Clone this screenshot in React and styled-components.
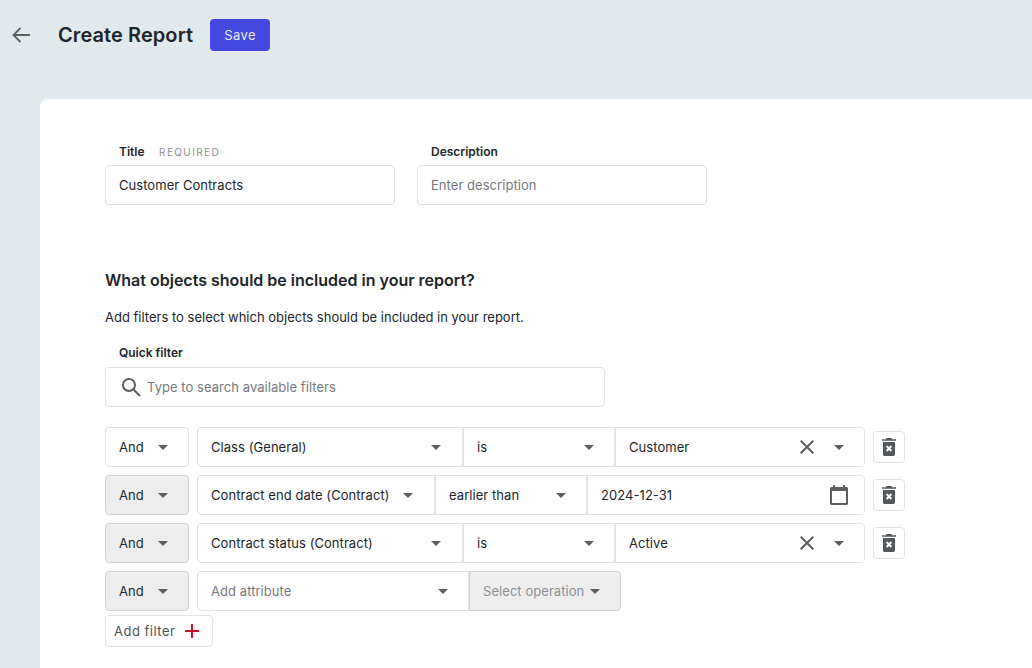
import React from 'react';
import styled, { createGlobalStyle } from 'styled-components';

const Global = createGlobalStyle`
  html, body { margin: 0; padding: 0; height: 100%; overflow: hidden; }
  body { background: #e1e9ec; font-family: Inter, "Liberation Sans", sans-serif; color: #212529; }
  * { box-sizing: border-box; }
`;

const Page = styled.div`
  width: 1032px;
  height: 668px;
  display: flex;
  flex-direction: column;
  overflow: hidden;
`;

const Header = styled.header`
  height: 99px;
  flex: none;
  display: flex;
  align-items: flex-start;
  padding: 19px 0 0 12px;
`;

const BackIcon = styled.svg`
  width: 18px;
  height: 16px;
  margin-top: 8px;
  margin-right: 28px;
  fill: none;
  stroke: #5c5f62;
  stroke-width: 1.8;
`;

const PageTitle = styled.h1`
  margin: 0 17px 0 0;
  font-size: 20px;
  line-height: 32px;
  font-weight: 600;
  letter-spacing: 0.08px;
  color: #212529;
`;

const SaveButton = styled.button`
  width: 60px;
  height: 32px;
  border: 0;
  border-radius: 4px;
  background: #4349e0;
  color: #e8e9ff;
  font: 400 13px Inter, sans-serif;
  letter-spacing: 0.45px;
  padding: 0;
`;

const Card = styled.main`
  flex: 1;
  margin-left: 40px;
  background: #fff;
  border-radius: 8px 0 0 0;
  padding: 45px 0 0 65px;
`;

const FieldRow = styled.div`
  display: flex;
  gap: 22px;
`;

const Field = styled.div`
  width: ${(p) => p.$width}px;
`;

const Label = styled.label`
  display: flex;
  align-items: baseline;
  height: 16px;
  line-height: 16px;
  margin: 0 0 ${(p) => p.$gap ?? 5}px 14px;
  font-size: 12px;
  font-weight: 600;
  color: #212529;
`;

const Required = styled.span`
  margin-left: 14.500px;
  font-size: 10px;
  font-weight: 400;
  letter-spacing: 1.4px;
  color: #8b8f93;
`;

const TextInput = styled.input`
  display: block;
  width: 100%;
  height: 40px;
  border: 1px solid #e2e3e5;
  border-radius: 4px;
  padding: 0 13px;
  font: 400 13px Inter, sans-serif;
  letter-spacing: 0.05px;
  color: #212529;
  outline: none;
  background: #fff;
  &::placeholder { color: #75797d; opacity: 1; }
`;

const SectionTitle = styled.h2`
  margin: 65px 0 0;
  font-size: 16px;
  line-height: 20px;
  font-weight: 600;
  color: #212529;
`;

const Hint = styled.p`
  margin: 17px 0 0;
  font-size: 13px;
  line-height: 20px;
  color: #212529;
`;

const QuickFilter = styled.div`
  margin-top: 18px;
  width: 500px;
`;

const SearchBox = styled.div`
  position: relative;
`;

const SearchIcon = styled.svg`
  position: absolute;
  left: 16px;
  top: 10px;
  width: 20px;
  height: 20px;
  fill: none;
  stroke: #5c5f62;
  stroke-width: 2;
`;

const SearchInput = styled(TextInput)`
  padding-left: 41px;
`;

const Rows = styled.div`
  margin-top: 20px;
  display: flex;
  flex-direction: column;
  gap: 8px;
`;

const Row = styled.div`
  display: flex;
  align-items: center;
`;

const Select = styled.div`
  flex: none;
  width: ${(p) => p.$width}px;
  height: 40px;
  display: flex;
  align-items: center;
  padding: 0 ${(p) => p.$right ?? 20}px 0 13px;
  border: 1px solid #e2e3e5;
  border-radius: ${(p) => p.$radius || '4px'};
  background: #fff;
  font-size: 13px;
  letter-spacing: 0.06px;
  color: #212529;
  ${(p) => p.$shaded && 'background: #eeeeee; border-color: #cfd1d3;'}
  ${(p) => p.$disabled && 'background: #eeeeee; border-color: #cfd1d3; color: #8b8f93;'}
  ${(p) => p.$muted && 'color: #75797d;'}
`;

const SelectText = styled.span`
  flex: 1;
  white-space: nowrap;
`;

const Caret = styled.i`
  flex: none;
  width: 0;
  height: 0;
  border-left: 5px solid transparent;
  border-right: 5px solid transparent;
  border-top: 5px solid #5c5f62;
`;

const Group = styled.div`
  display: flex;
  margin-left: 8px;
`;

const ClearIcon = styled.svg`
  flex: none;
  width: 14px;
  height: 14px;
  margin-right: 20px;
  fill: none;
  stroke: #5c5f62;
  stroke-width: 2;
`;

const CalendarIcon = styled.svg`
  flex: none;
  width: 18px;
  height: 20px;
  margin-right: -4px;
`;

const TrashButton = styled.button`
  flex: none;
  width: 32px;
  height: 32px;
  margin-left: 8px;
  padding: 0;
  display: flex;
  align-items: center;
  justify-content: center;
  background: #fff;
  border: 1px solid #e2e3e5;
  border-radius: 4px;
`;

const AddFilter = styled.button`
  margin-top: -4px;
  align-self: flex-start;
  width: 108px;
  height: 32px;
  padding: 0 0 0 8px;
  display: flex;
  align-items: center;
  gap: 10px;
  background: #fff;
  border: 1px solid #e2e3e5;
  border-radius: 4px;
  font: 400 13px Inter, sans-serif;
  letter-spacing: 0.5px;
  color: #4f5357;
`;

const Trash = () => (
  <TrashButton aria-label="Remove">
    <svg width="14" height="18" viewBox="0 0 14 18">
      <path fill="#55585b" d="M4.5 0h5l.7 1.2H14v1.6H0V1.2h3.8zM1 4h12v12.2c0 1-.8 1.8-1.8 1.8H2.800c-1 0-1.800-.8-1.800-1.800z" />
      <path stroke="#fff" strokeWidth="2" d="M4.600 8l4.800 5M9.400 8l-4.800 5" />
    </svg>
  </TrashButton>
);

const Clear = () => (
  <ClearIcon viewBox="0 0 14 14"><path d="M.7.7l12.600 12.600M13.300.7L.7 13.300" /></ClearIcon>
);

const Calendar = () => (
  <CalendarIcon viewBox="0 0 18 20">
    <path fill="#5c5f62" d="M3 0h2v2h8V0h2v2h1.500C17.300 2 18 2.700 18 3.500v15c0 .8-.7 1.500-1.500 1.500h-15C.7 20 0 19.300 0 18.500v-15C0 2.700.7 2 1.500 2H3zM2 6v12h14V6z" />
  </CalendarIcon>
);

function App() {
  return (
    <Page>
      <Global />
      <Header>
        <BackIcon viewBox="0 0 18 16"><path d="M18 8H1.500M8.500 1L1.500 8l7 7" /></BackIcon>
        <PageTitle>Create Report</PageTitle>
        <SaveButton>Save</SaveButton>
      </Header>

      <Card>
        <FieldRow>
          <Field $width={290}>
            <Label>Title <Required>REQUIRED</Required></Label>
            <TextInput defaultValue="Customer Contracts" />
          </Field>
          <Field $width={290}>
            <Label>Description</Label>
            <TextInput placeholder="Enter description" />
          </Field>
        </FieldRow>

        <SectionTitle>What objects should be included in your report?</SectionTitle>
        <Hint>Add filters to select which objects should be included in your report.</Hint>

        <QuickFilter>
          <Label $gap={6}>Quick filter</Label>
          <SearchBox>
            <SearchIcon viewBox="0 0 20 20"><circle cx="8" cy="8" r="6" /><path d="M12.500 12.500L19 19" /></SearchIcon>
            <SearchInput placeholder="Type to search available filters" />
          </SearchBox>
        </QuickFilter>

        <Rows>
          <Row>
            <Select $width={84}><SelectText>And</SelectText><Caret /></Select>
            <Group>
              <Select $width={266} $radius="4px 0 0 4px" $right={21}><SelectText>Class (General)</SelectText><Caret /></Select>
              <Select $width={152} $radius="0"><SelectText>is</SelectText><Caret /></Select>
              <Select $width={250} $radius="0 4px 4px 0"><SelectText>Customer</SelectText><Clear /><Caret /></Select>
            </Group>
            <Trash />
          </Row>
          <Row>
            <Select $width={84} $shaded><SelectText>And</SelectText><Caret /></Select>
            <Group>
              <Select $width={238} $radius="4px 0 0 4px" $right={21}><SelectText>Contract end date (Contract)</SelectText><Caret /></Select>
              <Select $width={152} $radius="0"><SelectText>earlier than</SelectText><Caret /></Select>
              <Select $width={278} $radius="0 4px 4px 0"><SelectText>2024-12-31</SelectText><Calendar /></Select>
            </Group>
            <Trash />
          </Row>
          <Row>
            <Select $width={84} $shaded><SelectText>And</SelectText><Caret /></Select>
            <Group>
              <Select $width={266} $radius="4px 0 0 4px" $right={21}><SelectText>Contract status (Contract)</SelectText><Caret /></Select>
              <Select $width={152} $radius="0"><SelectText>is</SelectText><Caret /></Select>
              <Select $width={250} $radius="0 4px 4px 0"><SelectText>Active</SelectText><Clear /><Caret /></Select>
            </Group>
            <Trash />
          </Row>
          <Row>
            <Select $width={84} $shaded><SelectText>And</SelectText><Caret /></Select>
            <Group>
              <Select $width={272} $muted $radius="4px 0 0 4px"><SelectText>Add attribute</SelectText><Caret /></Select>
              <Select $width={152} $disabled $radius="0 4px 4px 0"><SelectText>Select operation</SelectText><Caret /></Select>
            </Group>
          </Row>
          <AddFilter>
            Add filter
            <svg width="14" height="14" viewBox="0 0 14 14"><path stroke="#c8102e" strokeWidth="2" d="M7 0v14M0 7h14" /></svg>
          </AddFilter>
        </Rows>
      </Card>
    </Page>
  );
}

export default App;
